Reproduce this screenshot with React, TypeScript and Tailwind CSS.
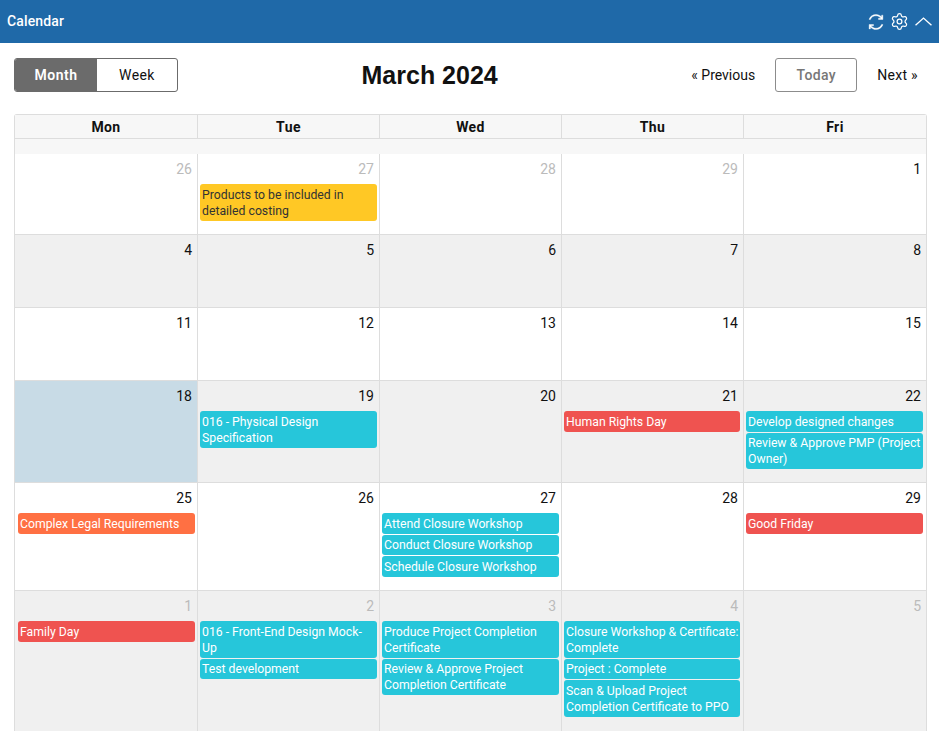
import { Settings } from "lucide-react";
import { LiaSyncSolid } from "react-icons/lia";

type Ev = { t: string; c: "cyan" | "red" | "orange" | "yellow" };
type Cell = { d: number; dim?: boolean; bg?: string; ev?: Ev[] };

const cy = (t: string): Ev => ({ t, c: "cyan" });
const re = (t: string): Ev => ({ t, c: "red" });

const rows: { h: string; alt: boolean; cells: Cell[] }[] = [
  {
    h: "h-[81px]",
    alt: false,
    cells: [
      { d: 26, dim: true },
      { d: 27, dim: true, ev: [{ t: "Products to be included in detailed costing", c: "yellow" }] },
      { d: 28, dim: true },
      { d: 29, dim: true },
      { d: 1 },
    ],
  },
  { h: "h-[73px]", alt: true, cells: [{ d: 4 }, { d: 5 }, { d: 6 }, { d: 7 }, { d: 8 }] },
  { h: "h-[73px]", alt: false, cells: [{ d: 11 }, { d: 12 }, { d: 13 }, { d: 14 }, { d: 15 }] },
  {
    h: "h-[102px]",
    alt: true,
    cells: [
      { d: 18, bg: "bg-[#c8dbe6]" },
      { d: 19, ev: [cy("016 - Physical Design Specification")] },
      { d: 20 },
      { d: 21, ev: [re("Human Rights Day")] },
      { d: 22, ev: [cy("Develop designed changes"), cy("Review & Approve PMP (Project Owner)")] },
    ],
  },
  {
    h: "h-[108px]",
    alt: false,
    cells: [
      { d: 25, ev: [{ t: "Complex Legal Requirements", c: "orange" }] },
      { d: 26 },
      { d: 27, ev: [cy("Attend Closure Workshop"), cy("Conduct Closure Workshop"), cy("Schedule Closure Workshop")] },
      { d: 28 },
      { d: 29, ev: [re("Good Friday")] },
    ],
  },
  {
    h: "h-[140px]",
    alt: true,
    cells: [
      { d: 1, dim: true, ev: [re("Family Day")] },
      { d: 2, dim: true, ev: [cy("016 - Front-End Design Mock-Up"), cy("Test development")] },
      { d: 3, dim: true, ev: [cy("Produce Project Completion Certificate"), cy("Review & Approve Project Completion Certificate")] },
      { d: 4, dim: true, ev: [cy("Closure Workshop & Certificate: Complete"), cy("Project : Complete"), cy("Scan & Upload Project Completion Certificate to PPO")] },
      { d: 5, dim: true },
    ],
  },
];

const evClass: Record<Ev["c"], string> = {
  cyan: "bg-[#26c6da] text-white",
  red: "bg-[#ef5350] text-white",
  orange: "bg-[#ff7043] text-white",
  yellow: "bg-[#ffc825] text-[#333333]",
};

export default function App() {
  return (
    <div className="h-[731px] w-[939px] overflow-hidden bg-white font-['Roboto','Noto_Sans',sans-serif] text-[14px] text-[#111111]">
      <header className="flex h-[43px] items-center justify-between bg-[#1f69a8] pl-[7px] pr-[7px] text-white">
        <span className="text-[14px] font-medium tracking-[0.15px]">Calendar</span>
        <div className="flex items-center gap-[4px]">
          <LiaSyncSolid className="h-[20px] w-[20px]" stroke="currentColor" strokeWidth={0.6} />
          <Settings className="h-[19px] w-[19px]" strokeWidth={1.6} />
          <svg viewBox="0 0 16 8" className="ml-[2px] h-[9px] w-[17px]" fill="none" stroke="currentColor" strokeWidth="1.3">
            <path d="M0.5 7.5 L8 0.8 L15.5 7.5" />
          </svg>
        </div>
      </header>

      <div className="mt-[15px] flex h-[34px] items-center justify-between pl-[14px] pr-[21px]">
        <div className="flex h-[34px] w-[164px] overflow-hidden rounded-[3px] border border-[#6b6b6b]">
          <div className="flex w-[82px] items-center justify-center bg-[#6b6b6b] font-semibold tracking-[0.5px] text-white">Month</div>
          <div className="flex flex-1 items-center justify-center tracking-[0.4px]">Week</div>
        </div>
        <h1 className="ml-[-10px] pt-px font-['Liberation_Sans',sans-serif] text-[25px] font-bold text-[#111111]">March 2024</h1>
        <div className="flex items-center">
          <span className="mr-[20px]">« Previous</span>
          <span className="mr-[20px] flex h-[34px] w-[82px] items-center justify-center rounded-[3px] border border-[#8c8c8c] font-medium tracking-[0.3px] text-[#777777]">Today</span>
          <span className="tracking-[0.3px]">Next »</span>
        </div>
      </div>

      <div className="ml-[14px] mt-[22px] w-[913px] rounded-t-[3px] border-l border-r border-t border-[#dddddd]">
        <div className="grid h-[24px] grid-cols-[183px_182px_182px_182px_1fr] border-b border-[#dddddd] bg-[#f7f7f7]">
          {["Mon", "Tue", "Wed", "Thu", "Fri"].map((d, i) => (
            <div key={d} className={`flex items-center justify-center pt-px text-[14px] font-bold tracking-[0.4px] ${i < 4 ? "border-r border-[#dddddd]" : ""}`}>
              {d}
            </div>
          ))}
        </div>
        <div className="h-[15px] bg-[#f7f7f7]" />
        {rows.map((r, ri) => (
          <div key={ri} className={`grid grid-cols-[183px_182px_182px_182px_1fr] ${r.h} ${r.alt ? "bg-[#f0f0f0]" : "bg-white"} ${ri < rows.length - 1 ? "border-b border-[#dddddd]" : ""}`}>
            {r.cells.map((c, ci) => (
              <div key={ci} className={`${ci < 4 ? "border-r border-[#dddddd]" : ""} ${c.bg ?? ""} flex flex-col`}>
                <div className={`h-[30px] pr-[5px] pt-[5px] text-right leading-[20px] ${c.dim ? "text-[#bbbbbb]" : "text-[#111111]"}`}>{c.d}</div>
                <div className={`flex flex-col gap-px ${ci === 0 ? "pl-[3px]" : "pl-[2px]"} ${ci >= 3 ? "pr-[3px]" : "pr-[2px]"}`}>
                  {c.ev?.map((e) => (
                    <div key={e.t} className={`rounded-[3px] pb-[2px] pl-[2px] pt-[2.5px] text-[12.25px] leading-[16px] ${ci === 3 ? "pr-0" : "pr-[2px]"} ${evClass[e.c]}`}>
                      {e.t}
                    </div>
                  ))}
                </div>
              </div>
            ))}
          </div>
        ))}
      </div>
    </div>
  );
}
